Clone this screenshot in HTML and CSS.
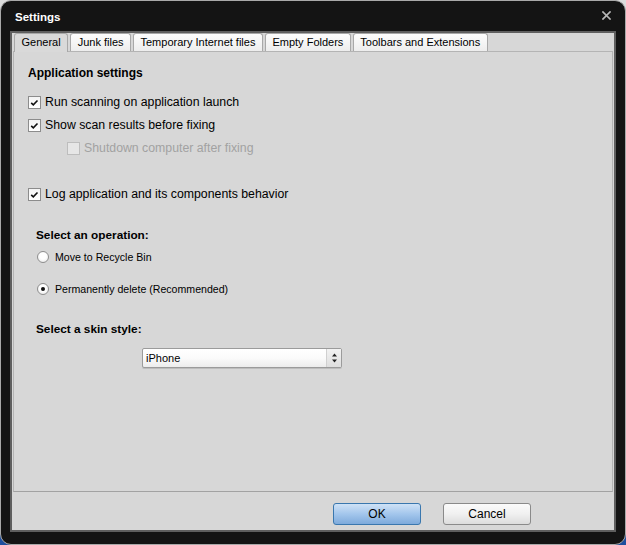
FILE: index.html
```html
<!DOCTYPE html>
<html>
<head>
<meta charset="utf-8">
<title>Settings</title>
<link rel="stylesheet" href="styles.css">
</head>
<body>
<div class="window">
  <div class="titlebar">
    <span class="title">Settings</span>
    <span class="close"><svg width="9" height="9" viewBox="0 0 9 9"><path d="M1 1 L8 8 M8 1 L1 8" stroke="#b8b8b8" stroke-width="1.7" stroke-linecap="square" fill="none"/></svg></span>
  </div>
  <div class="panel">
    <div class="tabs">
      <div class="tab active">General</div>
      <div class="tab">Junk files</div>
      <div class="tab">Temporary Internet files</div>
      <div class="tab">Empty Folders</div>
      <div class="tab">Toolbars and Extensions</div>
    </div>
    <div class="page">
      <div class="heading">Application settings</div>
      <div class="check row1"><span class="box"><svg width="11" height="11" viewBox="0 0 11 11"><path d="M2.2 5.8 L4.3 7.8 L8.5 3.5" stroke="#111" stroke-width="1.6" fill="none"/></svg></span>Run scanning on application launch</div>
      <div class="check"><span class="box"><svg width="11" height="11" viewBox="0 0 11 11"><path d="M2.2 5.8 L4.3 7.8 L8.5 3.5" stroke="#111" stroke-width="1.6" fill="none"/></svg></span>Show scan results before fixing</div>
      <div class="check disabled"><span class="box"></span>Shutdown computer after fixing</div>
      <div class="check row4"><span class="box"><svg width="11" height="11" viewBox="0 0 11 11"><path d="M2.2 5.8 L4.3 7.8 L8.5 3.5" stroke="#111" stroke-width="1.6" fill="none"/></svg></span>Log application and its components behavior</div>
      <div class="section">
        <div class="subheading">Select an operation:</div>
        <div class="radio first"><span class="circle"></span>Move to Recycle Bin</div>
        <div class="radio second"><span class="circle on"></span>Permanently delete (Recommended)</div>
        <div class="subheading skin">Select a skin style:</div>
        <div class="select">
          <span class="value">iPhone</span>
          <span class="spin"><svg width="7" height="12" viewBox="0 0 7 12"><path d="M3.5 1.5 L6 4.5 L1 4.5 Z M1 7.5 L6 7.5 L3.5 10.5 Z" fill="#222"/></svg></span>
        </div>
      </div>
    </div>
    <div class="footer">
      <button class="btn ok">OK</button>
      <button class="btn">Cancel</button>
    </div>
  </div>
</div>
</body>
</html>
```
FILE: styles.css
```css
html {
  background: linear-gradient(to bottom, #dcdcdc 0, #dcdcdc 50%, #1e4f9e 50%, #1e4f9e 100%);
}
body {
  margin: 0;
  font-family: "Liberation Sans", Arial, sans-serif;
  color: #000;
}
.window {
  width: 626px;
  height: 545px;
  box-sizing: border-box;
  border: 1px solid #a9a9a9;
  border-radius: 11px;
  background: #141414;
  display: flex;
  flex-direction: column;
}
.titlebar {
  height: 30px;
  display: flex;
  align-items: center;
  justify-content: space-between;
  padding: 2px 14px 0 14px;
  box-sizing: border-box;
}
.title {
  color: #fff;
  font-weight: bold;
  font-size: 11.5px;
}
.close {
  display: flex;
  margin-top: -4px;
}
.panel {
  flex: 1;
  margin: 0 9px 12px 9px;
  border: 2px solid #5f5f5f;
  background: #d7d7d7;
  display: flex;
  flex-direction: column;
}
.tabs {
  height: 18px;
  display: flex;
  gap: 2px;
  padding-left: 2px;
  align-items: flex-end;
}
.tab {
  height: 18px;
  box-sizing: border-box;
  padding: 0 6.5px;
  font-size: 11px;
  line-height: 17px;
  border: 1px solid #a8a8a8;
  border-bottom: none;
  border-radius: 3px 3px 0 0;
  background: linear-gradient(to bottom, #fdfdfd, #ededed);
  color: #000;
  white-space: nowrap;
}
.tab.active {
  background: #d9d9d9;
  height: 19px;
  margin-bottom: -1px;
  position: relative;
  z-index: 1;
}
.page {
  flex: 1;
  margin: 0 1px;
  border: 1px solid #b4b4b4;
  border-bottom-color: #a2a2a2;
  padding: 13px 14px 0 14px;
  font-size: 12px;
}
.heading {
  font-weight: bold;
  line-height: 16px;
  height: 16px;
}
.check {
  display: flex;
  align-items: center;
  height: 16px;
  margin-top: 7px;
  gap: 4px;
  font-size: 12.3px;
  white-space: nowrap;
}
.check.row1 { margin-top: 13px; }
.check.row4 { margin-top: 30px; }
.check.disabled {
  color: #a2a2a2;
  margin-left: 39px;
}
.box {
  width: 13px;
  height: 13px;
  box-sizing: border-box;
  border: 1px solid #8c8c8c;
  background: linear-gradient(to bottom, #f4f4f4, #ffffff);
  display: flex;
  align-items: center;
  justify-content: center;
  flex: none;
}
.check.disabled .box {
  border-color: #bdbdbd;
  background: #e6e6e6;
}
.section {
  padding-left: 8px;
  margin-top: 25px;
}
.subheading {
  font-weight: bold;
  line-height: 16px;
  height: 16px;
  font-size: 11.8px;
}
.subheading.skin { margin-top: 24px; }
.radio {
  display: flex;
  align-items: center;
  height: 16px;
  gap: 6px;
  font-size: 10.6px;
  white-space: nowrap;
}
.radio.first { margin-top: 6px; }
.radio.second { margin-top: 16px; }
.circle {
  width: 12px;
  height: 12px;
  box-sizing: border-box;
  margin-left: 1px;
  border-radius: 50%;
  border: 1px solid #8e8e8e;
  background: radial-gradient(circle at 50% 40%, #ffffff 40%, #e4e4e4 100%);
  display: flex;
  align-items: center;
  justify-content: center;
  flex: none;
}
.circle.on::after {
  content: "";
  width: 4px;
  height: 4px;
  border-radius: 50%;
  background: #111;
}
.select {
  margin-top: 11px;
  margin-left: 106px;
  width: 200px;
  height: 20px;
  box-sizing: border-box;
  border: 1px solid #9b9b9b;
  border-radius: 2px;
  background: linear-gradient(to bottom, #ffffff 0, #fbfbfb 50%, #ececec 100%);
  display: flex;
  align-items: center;
  justify-content: space-between;
  font-size: 11px;
  box-shadow: 0 1px 0 #bdbdbd;
}
.select .value { padding-left: 3px; }
.spin {
  width: 14px;
  height: 18px;
  display: flex;
  align-items: center;
  justify-content: center;
  background: linear-gradient(to bottom, #f2f2f2, #dedede);
  border-left: 1px solid #d0d0d0;
}
.footer {
  height: 38px;
  box-sizing: border-box;
  padding: 11px 83px 0 0;
  display: flex;
  justify-content: flex-end;
  align-items: flex-start;
  gap: 22px;
}
.btn {
  width: 88px;
  height: 22px;
  margin: 0;
  padding: 0;
  font-family: "Liberation Sans", Arial, sans-serif;
  font-size: 12px;
  color: #000;
  border: 1px solid #8a8a8a;
  border-radius: 3px;
  background: linear-gradient(to bottom, #fbfbfb 0, #f0f0f0 50%, #dcdcdc 100%);
}
.btn.ok {
  border-color: #3a77ae;
  background: linear-gradient(to bottom, #cfe2f6 0, #a3c6ec 50%, #7eaadb 100%);
}
```
